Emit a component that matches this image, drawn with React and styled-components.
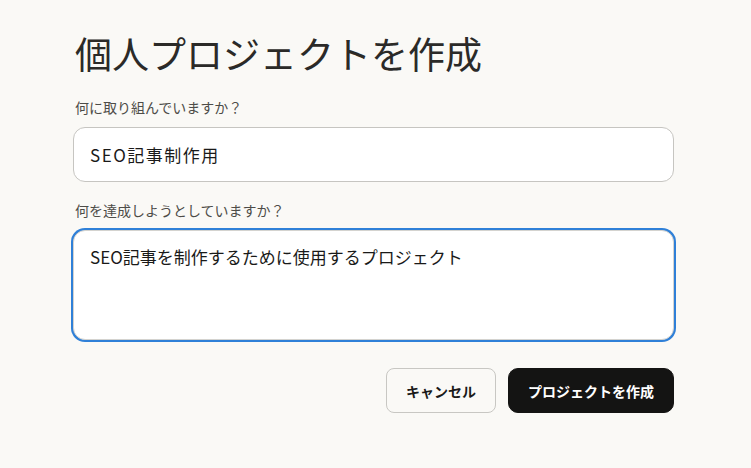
import React, { useState } from 'react';
import styled, { createGlobalStyle } from 'styled-components';

const GlobalStyle = createGlobalStyle`
  html, body {
    margin: 0;
    padding: 0;
    background: #faf9f6;
  }
  body {
    font-family: 'Noto Sans CJK JP', 'Noto Sans', sans-serif;
    color: #1f1e1d;
  }
`;

const Page = styled.div`
  width: 751px;
  min-height: 468px;
  box-sizing: border-box;
  padding: 31px 0 0 73px;
`;

const Form = styled.form`
  width: 601px;
  display: flex;
  flex-direction: column;
`;

const Title = styled.h1`
  margin: 0 0 0 2px;
  font-family: 'Liberation Serif', 'Noto Sans CJK JP', serif;
  font-weight: 400;
  font-size: 37px;
  line-height: 52px;
  color: #2b2a28;
`;

const Label = styled.label`
  margin: ${({ $top }) => $top}px 0 10px 2px;
  font-size: 14px;
  line-height: 20px;
  color: #4d4c48;
`;

const TextInput = styled.input`
  box-sizing: border-box;
  width: 100%;
  height: 55px;
  padding: 0 16px;
  border: 1px solid #c6c5c1;
  border-radius: 12px;
  background: #fff;
  font-family: inherit;
  font-size: 17px;
  letter-spacing: 1.5px;
  color: #1a1a19;
  outline: none;
`;

const TextArea = styled.textarea`
  box-sizing: border-box;
  width: 100%;
  height: 110px;
  padding: 14px 16px;
  border: 1px solid #d4d3cf;
  border-radius: 12px;
  background: #fff;
  font-family: inherit;
  font-size: 17px;
  line-height: 24px;
  color: #1a1a19;
  resize: none;
  outline: none;
  box-shadow: 0 0 0 2px #2f80d8;
`;

const Actions = styled.div`
  display: flex;
  justify-content: flex-end;
  gap: 12px;
  margin-top: 28px;
`;

const Button = styled.button`
  height: 45px;
  padding: 0 ${({ $primary }) => ($primary ? 19 : 19)}px;
  border-radius: ${({ $primary }) => ($primary ? 10 : 8)}px;
  border: 1px solid ${({ $primary }) => ($primary ? '#141413' : '#c8c7c3')};
  background: ${({ $primary }) => ($primary ? '#141413' : 'transparent')};
  color: ${({ $primary }) => ($primary ? '#ffffff' : '#1a1a19')};
  font-family: inherit;
  font-size: 14px;
  font-weight: 700;
  cursor: pointer;
`;

const App = () => {
  const [name, setName] = useState('SEO記事制作用');
  const [goal, setGoal] = useState('SEO記事を制作するために使用するプロジェクト');

  return (
    <>
      <GlobalStyle />
      <Page>
        <Form onSubmit={(e) => e.preventDefault()}>
          <Title>個人プロジェクトを作成</Title>
          <Label $top={14}>何に取り組んでいますか？</Label>
          <TextInput value={name} onChange={(e) => setName(e.target.value)} />
          <Label $top={18}>何を達成しようとしていますか？</Label>
          <TextArea value={goal} onChange={(e) => setGoal(e.target.value)} />
          <Actions>
            <Button type="button">キャンセル</Button>
            <Button type="submit" $primary>プロジェクトを作成</Button>
          </Actions>
        </Form>
      </Page>
    </>
  );
};

export default App;
